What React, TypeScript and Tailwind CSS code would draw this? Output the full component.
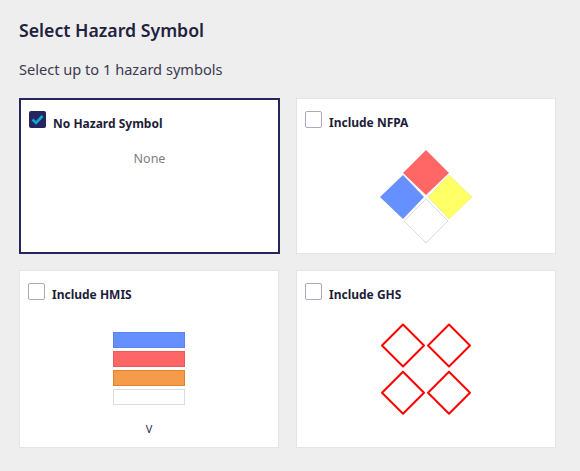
const font = { fontFamily: '"Noto Sans", sans-serif' };

function Check({ checked }: { checked?: boolean }) {
  if (checked) {
    return (
      <div className="w-[17px] h-[17px] rounded-[2px] bg-[#25265e] flex items-center justify-center shrink-0">
        <svg width="13" height="11" viewBox="0 0 13 11" fill="none">
          <path d="M1.5 5.5 L5 9 L11.5 2" stroke="#12a5d8" strokeWidth="2.6" />
        </svg>
      </div>
    );
  }
  return <div className="w-[17px] h-[17px] rounded-[2px] border border-[#a9a9c0] bg-white shrink-0" />;
}

function Card({
  label,
  checked,
  children,
}: {
  label: string;
  checked?: boolean;
  children: React.ReactNode;
}) {
  return (
    <div
      className={
        checked
          ? "bg-white border-[2px] border-[#25265e] pl-2 pt-[11px] flex flex-col -mr-px"
          : "bg-white border border-[#e4e4e4] pl-2 pt-3 flex flex-col"
      }
    >
      <div className="flex items-start gap-[7px] h-[23px]">
        <Check checked={checked} />
        <span
          className={
            checked
              ? "text-[12px] font-bold text-[#1d1d3a] mt-[4px] leading-[18px]"
              : "text-[12px] font-bold text-[#1d1d3a] mt-[3px] leading-[18px]"
          }
        >
          {label}
        </span>
      </div>
      <div className="flex-1 flex flex-col items-center -ml-2">{children}</div>
    </div>
  );
}

export default function App() {
  return (
    <div className="w-[580px] h-[471px] bg-[#eeeeee] pl-[19px] pr-[24px] pt-[18px] overflow-hidden" style={font}>
      <h1 className="text-[17.7px] font-semibold text-[#22223f] leading-[24px]">Select Hazard Symbol</h1>
      <p className="text-[14.6px] text-[#3a3a50] leading-[20px] mt-[17px]">Select up to 1 hazard symbols</p>
      <div className="grid grid-cols-2 gap-x-[17px] gap-y-[16px] grid-rows-[156px_178px] mt-[19px]">
        <Card label="No Hazard Symbol" checked>
          <span className="text-[12.5px] text-[#7d7d87] mt-[16px] leading-[18px]">None</span>
        </Card>
        <Card label="Include NFPA">
          <svg width="96" height="96" viewBox="0 0 96 96" className="mt-[14px]">
            <polygon points="48,2 71,25 48,47 25,25" fill="#ff6666" />
            <polygon points="2,49 25,27 46,49 25,71" fill="#6690ff" />
            <polygon points="50,49 71,27 94,49 71,71" fill="#ffff66" stroke="#e5e58c" strokeWidth="0.6" />
            <polygon points="48,51 70,73 48,95 26,73" fill="#ffffff" stroke="#dddddd" strokeWidth="1" />
          </svg>
        </Card>
        <Card label="Include HMIS">
          <div className="flex flex-col gap-[3px] w-[72px] mt-[26px]">
            <div className="h-4 bg-[#6690ff] border border-[#5c84e8]" />
            <div className="h-4 bg-[#ff6666] border border-[#e85c5c]" />
            <div className="h-4 bg-[#f59c4c] border border-[#e0832c]" />
            <div className="h-4 bg-white border border-[#dddddd]" />
          </div>
          <span className="text-[11px] text-[#2c2c48] mt-[15px] leading-[18px]">V</span>
        </Card>
        <Card label="Include GHS">
          <svg width="96" height="96" viewBox="0 0 96 96" className="mt-[16px]" fill="none" stroke="#ff0000" strokeWidth="2" strokeLinejoin="round">
            <polygon points="25,2.5 46,23.5 25,44.5 4,23.5" />
            <polygon points="71,2.5 92,23.5 71,44.5 50,23.5" />
            <polygon points="25,49.8 46,70.8 25,91.8 4,70.8" />
            <polygon points="71,49.8 92,70.8 71,91.8 50,70.8" />
          </svg>
        </Card>
      </div>
    </div>
  );
}
